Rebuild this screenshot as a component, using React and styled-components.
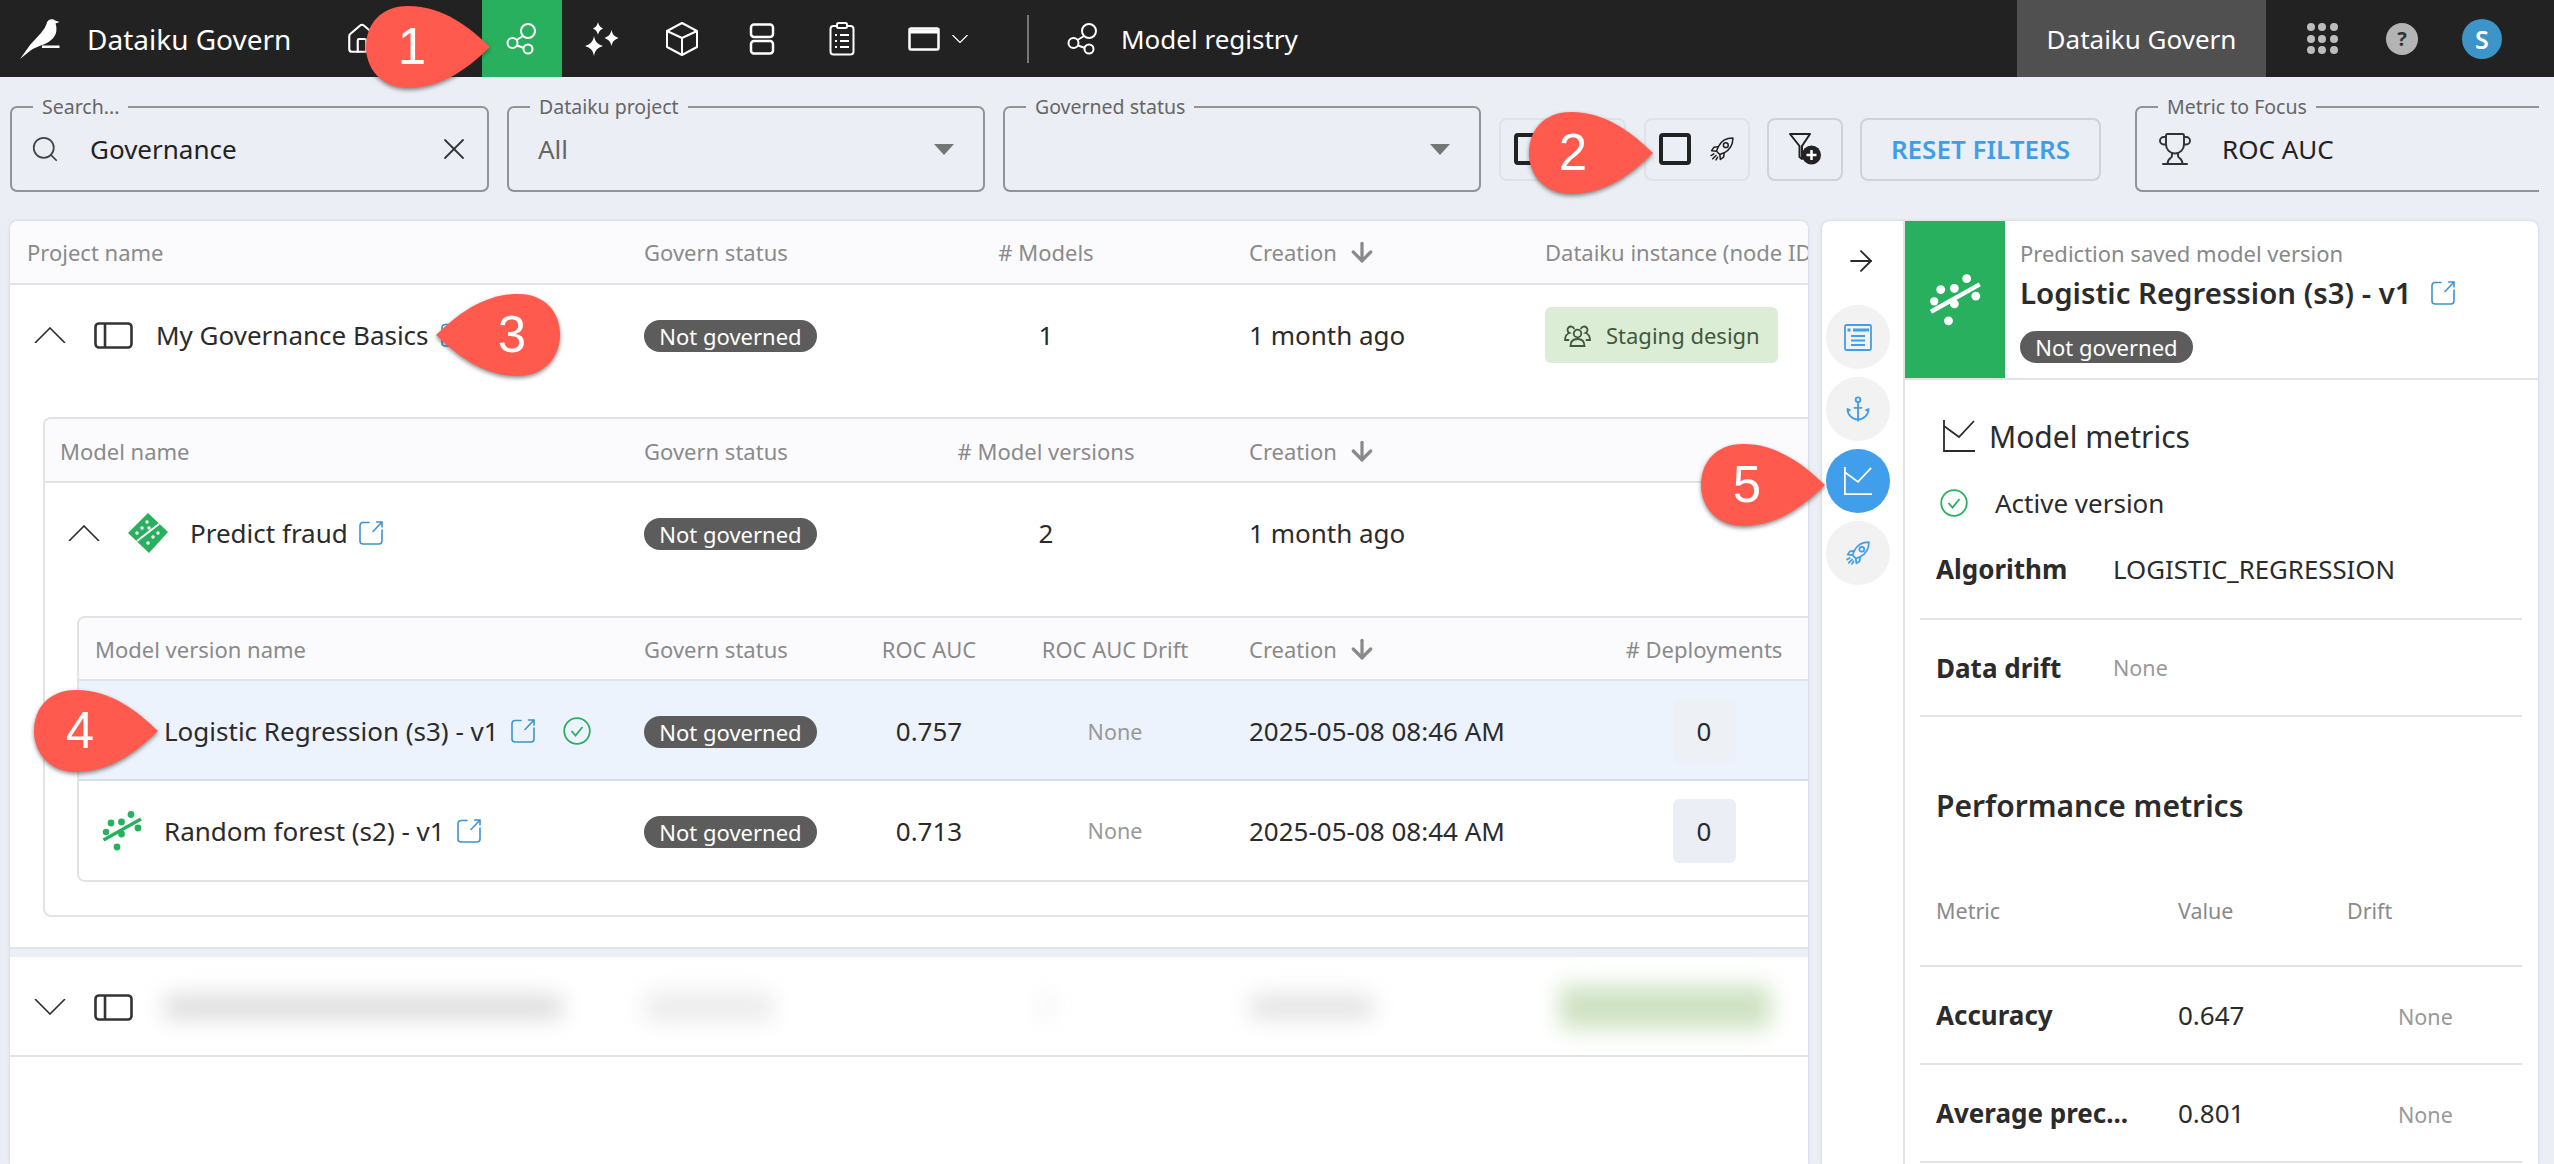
import React from "react";
import styled, { createGlobalStyle } from "styled-components";
import { House, Search, X, ArrowRight, ArrowDown, Anchor, Trophy } from "lucide-react";

const GlobalStyle = createGlobalStyle`
  html, body {
    margin: 0;
    padding: 0;
    background: #ebeef4;
    font-family: "Noto Sans", "Open Sans", sans-serif;
    color: #2b2b2b;
  }
  * { box-sizing: border-box; }
`;

const Frame = styled.div`
  position: relative;
  width: 2554px;
  height: 1164px;
  overflow: hidden;
  display: flex;
  flex-direction: column;
  background: #ebeef4;
`;

/* top bar */
const TopBar = styled.header`
  height: 77px;
  flex: none;
  display: flex;
  align-items: center;
  background: #222222;
  color: #fff;
`;

const Brand = styled.div`
  width: 322px;
  flex: none;
  display: flex;
  align-items: center;
  gap: 27px;
  padding-left: 20px;
  font-size: 28px;
`;

const NavItem = styled.div`
  width: 80px;
  height: 77px;
  flex: none;
  display: flex;
  align-items: center;
  justify-content: center;
  gap: 12px;
  background: ${(p) => (p.$active ? "#29b05f" : "transparent")};
`;

const WindowItem = styled(NavItem)`
  width: 110px;
  justify-content: flex-start;
  padding-left: 26px;
`;

const Divider = styled.div`
  width: 2px;
  height: 48px;
  margin-left: 35px;
  background: #777;
`;

const Crumb = styled.div`
  display: flex;
  align-items: center;
  gap: 22px;
  margin-left: 38px;
  font-size: 26px;
`;

const TopRight = styled.div`
  margin-left: auto;
  margin-right: 32px;
  display: flex;
  align-items: center;
  height: 77px;
`;

const InstanceTab = styled.div`
  width: 249px;
  height: 77px;
  margin-right: 16px;
  display: flex;
  align-items: center;
  justify-content: center;
  background: #505050;
  font-size: 26px;
`;

const Dots = styled.div`
  display: grid;
  grid-template-columns: repeat(3, 8px);
  gap: 3.5px;
  span {
    width: 8px;
    height: 8px;
    border-radius: 50%;
    background: #bdbdbd;
  }
`;

const HelpDot = styled.div`
  width: 32px;
  height: 32px;
  border-radius: 50%;
  display: flex;
  align-items: center;
  justify-content: center;
  background: #b4b4b4;
  color: #333;
  font-size: 20px;
  font-weight: 700;
`;

const Avatar = styled.div`
  width: 40px;
  height: 40px;
  border-radius: 50%;
  display: flex;
  align-items: center;
  justify-content: center;
  background: #3d94c8;
  color: #fff;
  font-size: 25px;
  font-weight: 600;
`;

/* filter bar */
const FilterBar = styled.div`
  height: 144px;
  flex: none;
  display: flex;
  align-items: center;
  padding: 0 0 0 10px;
  gap: 18px;
`;

const Field = styled.div`
  position: relative;
  width: ${(p) => p.$w}px;
  height: 86px;
  flex: none;
  display: flex;
  align-items: center;
  gap: ${(p) => p.$gap || 0}px;
  padding: 0 ${(p) => p.$right ?? 23}px 0 ${(p) => p.$left ?? 23}px;
  border: 2px solid #8f9595;
  border-right: ${(p) => (p.$open ? "none" : "2px solid #8f9595")};
  border-radius: ${(p) => (p.$open ? "7px 0 0 7px" : "7px")};
  font-size: 26px;
  margin-left: ${(p) => p.$ml || 0}px;
`;

const FieldLabel = styled.label`
  position: absolute;
  top: -15px;
  left: 21px;
  padding: 0 9px;
  background: #ebeef4;
  color: #666;
  font-size: 19.5px;
  line-height: 27px;
`;

const FieldValue = styled.span`
  flex: 1;
  color: ${(p) => (p.$muted ? "#666" : "#222")};
`;

const Caret = styled.div`
  width: 0;
  height: 0;
  border-left: 10px solid transparent;
  border-right: 10px solid transparent;
  border-top: 11px solid #757575;
`;

const ToolButton = styled.button`
  width: ${(p) => p.$w}px;
  height: 63px;
  flex: none;
  display: flex;
  align-items: center;
  justify-content: ${(p) => (p.$center ? "center" : "flex-start")};
  gap: 19px;
  padding: ${(p) => (p.$center ? "0" : "0 0 0 13px")};
  background: transparent;
  border: 2px solid ${(p) => (p.$strong ? "#d0d2d6" : "#e0e2e6")};
  border-radius: 8px;
  font-family: inherit;
  margin-left: ${(p) => p.$ml || 0}px;
`;

const ResetButton = styled(ToolButton)`
  color: #3f9eea;
  font-size: 26px;
  font-weight: 600;
`;

const SquareGlyph = styled.span`
  width: 32px;
  height: 32px;
  flex: none;
  border: 4px solid #222;
  border-radius: 4px;
`;

/* content */
const Content = styled.main`
  flex: 1;
  min-height: 0;
  display: flex;
  gap: 14px;
  padding-left: 10px;
`;

const TablePanel = styled.section`
  width: 1798px;
  flex: none;
  overflow: hidden;
  background: #fff;
  border-radius: 8px 8px 0 0;
  box-shadow: 0 0 3px rgba(120, 130, 150, 0.35);
`;

const HeadRow = styled.div`
  display: grid;
  grid-template-columns: ${(p) => p.$cols};
  align-items: center;
  height: ${(p) => p.$h}px;
  padding-top: ${(p) => p.$pt || 0}px;
  background: #fbfbfe;
  border-bottom: 2px solid #e1e3e5;
  color: #8a8a8a;
  font-size: 22px;
  white-space: nowrap;
`;

const BodyRow = styled.div`
  display: grid;
  grid-template-columns: ${(p) => p.$cols};
  align-items: center;
  height: ${(p) => p.$h || 100}px;
  padding-top: ${(p) => (p.$line ? 2 : 0)}px;
  background: ${(p) => (p.$selected ? "#ecf3fd" : "#fff")};
  border-bottom: ${(p) => (p.$line ? `2px solid ${p.$selected ? "#d5dde6" : "#e1e3e5"}` : "none")};
  font-size: 26px;
  white-space: nowrap;
`;

const HeadCell = styled.div`
  padding-left: ${(p) => p.$pad || 0}px;
  display: flex;
  align-items: center;
  gap: 10px;
  justify-content: ${(p) => (p.$center ? "center" : "flex-start")};
`;

const NameCell = styled.div`
  display: flex;
  align-items: center;
  padding-left: ${(p) => p.$pad}px;
`;

const Gap = styled.span`
  width: ${(p) => p.$w}px;
  flex: none;
`;

const CenterCell = styled.div`
  display: flex;
  justify-content: center;
`;

const Muted = styled.span`
  color: #999;
  font-size: 21.5px;
`;

const Badge = styled.span`
  display: inline-flex;
  align-items: center;
  justify-content: center;
  width: 173px;
  height: 32px;
  border-radius: 16px;
  background: #5c5c5c;
  color: #fff;
  font-size: 22px;
`;

const InstanceTag = styled.span`
  display: inline-flex;
  align-items: center;
  gap: 15px;
  width: 233px;
  height: 56px;
  padding-left: 19px;
  border-radius: 6px;
  background: #dcedd5;
  color: #41583d;
  font-size: 22px;
`;

const CountBox = styled.span`
  display: flex;
  align-items: center;
  justify-content: center;
  width: 63px;
  height: 64px;
  border-radius: 6px;
  background: ${(p) => (p.$selected ? "#edf0f4" : "#ebeef4")};
`;

const Nested = styled.div`
  width: ${(p) => p.$w}px;
  margin-left: ${(p) => p.$ml}px;
  margin-top: ${(p) => p.$mt || 0}px;
  padding-bottom: ${(p) => p.$pb || 0}px;
  border: 2px solid #e1e3e5;
  border-right: none;
  border-radius: 8px 0 0 8px;
  overflow: hidden;
`;

const ProjectBlock = styled.div`
  height: 728px;
  border-bottom: 2px solid #e1e3e5;
`;

const Spacer = styled.div`
  height: 8px;
  background: #ebeef4;
`;

const BlurBar = styled.div`
  width: ${(p) => p.$w}px;
  height: ${(p) => p.$h}px;
  margin-left: ${(p) => p.$ml || 0}px;
  background: ${(p) => p.$bg};
  border-radius: 8px;
  filter: blur(11px);
`;

/* side panel */
const SidePanel = styled.aside`
  width: 716px;
  flex: none;
  display: flex;
  background: #fff;
  border-radius: 8px 8px 0 0;
  box-shadow: 0 0 3px rgba(120, 130, 150, 0.35);
  overflow: hidden;
`;

const Rail = styled.nav`
  width: 83px;
  flex: none;
  display: flex;
  flex-direction: column;
  gap: 8px;
  padding: 23px 0 0 4px;
  border-right: 2px solid #e1e3e5;
`;

const RailArrow = styled.div`
  height: 53px;
  padding-left: 18px;
`;

const RailButton = styled.div`
  width: 64px;
  height: 64px;
  border-radius: 50%;
  display: flex;
  align-items: center;
  justify-content: center;
  background: ${(p) => (p.$active ? "#419eea" : "#f2f2f2")};
`;

const SideBody = styled.div`
  flex: 1;
  display: flex;
  flex-direction: column;
  min-width: 0;
`;

const SideHeader = styled.div`
  height: 159px;
  flex: none;
  display: flex;
  border-bottom: 2px solid #e1e3e5;
`;

const GreenTile = styled.div`
  width: 100px;
  display: flex;
  align-items: center;
  justify-content: center;
  background: #29b05f;
`;

const SideTitles = styled.div`
  padding: 18px 0 0 15px;
`;

const Kind = styled.div`
  color: #888;
  font-size: 22px;
  line-height: 28px;
`;

const SideName = styled.div`
  display: flex;
  align-items: center;
  gap: 19px;
  margin-top: 5px;
  height: 42px;
  font-size: 29.4px;
  font-weight: 600;
  white-space: nowrap;
`;

const SideBadgeWrap = styled.div`
  margin-top: 17px;
`;

const SideSection = styled.div`
  padding: 0 16px 0 15px;
`;

const MetricsTitle = styled.div`
  display: flex;
  align-items: center;
  gap: 14px;
  height: 32px;
  margin-top: 40px;
  padding-left: 23px;
  font-size: 30px;
`;

const ActiveRow = styled.div`
  display: flex;
  align-items: center;
  gap: 27px;
  height: 28px;
  margin-top: 37px;
  padding-left: 20px;
  font-size: 26px;
`;

const InfoRow = styled.div`
  display: grid;
  grid-template-columns: 177px 1fr;
  align-items: center;
  height: ${(p) => p.$h}px;
  margin-top: ${(p) => p.$mt || 0}px;
  padding-left: 16px;
  border-bottom: 2px solid #e1e3e5;
  font-size: 25.8px;
`;

const Key = styled.span`
  font-weight: 700;
  font-size: 26px;
  white-space: nowrap;
`;

const PerfTitle = styled.h2`
  margin: 69px 0 0;
  height: 40px;
  padding-left: 16px;
  font-size: 30px;
  line-height: 40px;
  font-weight: 600;
`;

const MetricHead = styled.div`
  display: grid;
  grid-template-columns: 242px 169px 1fr;
  align-items: center;
  height: 83px;
  margin-top: 58px;
  padding: 0 0 29px 16px;
  border-bottom: 2px solid #e1e3e5;
  color: #8a8a8a;
  font-size: 21.5px;
`;

const MetricRow = styled.div`
  display: grid;
  grid-template-columns: 242px 169px 1fr;
  align-items: center;
  height: 98px;
  padding-left: 16px;
  border-bottom: 2px solid #e1e3e5;
  font-size: 26px;
`;

const DriftNone = styled.div`
  padding-left: 51px;
`;

/* annotation markers over the screenshot */
const Marker = styled.div`
  position: absolute;
  left: ${(p) => p.$x}px;
  top: ${(p) => p.$y}px;
  width: 124px;
  height: 82px;
  filter: drop-shadow(0 2px 2px rgba(40, 40, 40, 0.55));
  svg {
    display: block;
    transform: ${(p) => (p.$flip ? "scaleX(-1)" : "none")};
  }
`;

const MarkerNumber = styled.span`
  position: absolute;
  top: 0;
  left: ${(p) => p.$nx}px;
  width: 40px;
  margin-left: -20px;
  text-align: center;
  color: #fff;
  font-family: "Liberation Sans", Arial, sans-serif;
  font-size: 51px;
  line-height: 82px;
`;

/* icons */
const Logo = () => (
  <svg width="40" height="40" viewBox="0 0 40 40" fill="#fff">
    <path d="M32 0.300C29 0.300 27 2 26.500 5C25.500 8 24 10 21 14L10 26L0 40L10.500 31.500C14 29 18 27.500 22 26C28 24 34 20 36 14C36.800 11 36.500 7 35.500 4.500L39.500 3L35 1.500C34 0.500 33 0.300 32 0.300Z" />
    <rect x="22" y="26.500" width="17.500" height="2.500" />
  </svg>
);

const RegistryIcon = ({ size = 32, color = "#fff" }) => (
  <svg width={size} height={size} viewBox="0 0 32 32" fill="none" stroke={color} strokeWidth="2">
    <circle cx="22" cy="8" r="7" />
    <circle cx="6.500" cy="20" r="5" />
    <circle cx="22" cy="26" r="4.500" />
    <path d="M17 13L10.500 17M11 22.500L18 25" />
  </svg>
);

const Sparkles = () => (
  <svg width="34" height="34" viewBox="0 0 34 34" fill="#fff">
    <path d="M13 0C14 3.500 14.500 4.500 18 6.500C14.500 8.500 14 9.500 13 13C12 9.500 11.500 8.500 8 6.500C11.500 4.500 12 3.500 13 0Z" />
    <path d="M26.500 8C27.500 12.500 29 14 33.500 16C29 18 27.500 19.500 26.500 24C25.500 19.500 24 18 19.500 16C24 14 25.500 12.500 26.500 8Z" />
    <path d="M9 14C10 20 12.500 22 18 24C12.500 26 10 28 9 34C8 28 5.500 26 0 24C5.500 22 8 20 9 14Z" />
  </svg>
);

const CubeIcon = () => (
  <svg width="32" height="34" viewBox="0 0 32 34" fill="none" stroke="#fff" strokeWidth="2" strokeLinejoin="round">
    <path d="M16 1L31 9V25L16 33L1 25V9Z" />
    <path d="M1 9L16 16L31 9M16 16V33" />
  </svg>
);

const StackIcon = () => (
  <svg width="26" height="32" viewBox="0 0 26 32" fill="none" stroke="#fff" strokeWidth="2.500">
    <rect x="2" y="1.500" width="22" height="12.500" rx="3" />
    <rect x="2" y="18" width="22" height="12.500" rx="3" />
  </svg>
);

const ClipboardIcon = () => (
  <svg width="26" height="34" viewBox="0 0 26 34" fill="none" stroke="#fff" strokeWidth="2">
    <rect x="1.500" y="4" width="23" height="28.500" rx="3" />
    <rect x="8" y="1" width="10" height="5" rx="1.500" fill="#222" />
    <path d="M6 13H8M11 13H20M6 19H8M11 19H20M6 25H8M11 25H20" />
  </svg>
);

const WindowIcon = () => (
  <svg width="32" height="24" viewBox="0 0 32 24" fill="none" stroke="#fff">
    <rect x="1.500" y="1.500" width="29" height="21" rx="1.500" strokeWidth="2.500" />
    <path d="M1.500 4.500H30.500" strokeWidth="4" />
  </svg>
);

const Chevron = ({ size = 32, up, color = "#2b2b2b", weight = 1.6 }) => (
  <svg width={size} height={size / 2} viewBox="0 0 32 16" fill="none" stroke={color} strokeWidth={weight}>
    <path d={up ? "M1 16L16 1L31 16" : "M1 0L16 15L31 0"} />
  </svg>
);

const PanelIcon = () => (
  <svg width="39" height="27" viewBox="0 0 39 27" fill="none" stroke="#333" strokeWidth="2.600">
    <rect x="1.500" y="1.500" width="36" height="24" rx="3.500" />
    <path d="M11 1.500V25.500" />
  </svg>
);

const LinkIcon = ({ size = 24 }) => (
  <svg width={size} height={size} viewBox="0 0 24 24" fill="none" stroke="#3d94c8" strokeWidth="1.600" strokeLinecap="round">
    <path d="M10 1.500H4A3 3 0 0 0 1 4.500V20A3 3 0 0 0 4 23H20A3 3 0 0 0 23 20V9" />
    <path d="M14 10.500L23 1M17.500 1H23V6" />
  </svg>
);

const CheckCircle = ({ size = 28 }) => (
  <svg width={size} height={size} viewBox="0 0 28 28" fill="none" stroke="#29b05f" strokeWidth="1.800">
    <circle cx="14" cy="14" r="12.800" />
    <path d="M8.500 14L12.500 18.500L19.500 10" />
  </svg>
);

const Scatter = ({ size = 40, color = "#29b05f" }) => (
  <svg width={size} height={size} viewBox="0 0 40 40" fill={color}>
    <circle cx="29" cy="3.500" r="3.400" />
    <circle cx="9" cy="12" r="3.400" />
    <circle cx="19.500" cy="11" r="3.400" />
    <circle cx="36" cy="17" r="3.400" />
    <circle cx="4" cy="21" r="3.200" />
    <circle cx="19.500" cy="23" r="3.400" />
    <circle cx="15" cy="36" r="3.400" />
    <path d="M1.500 29L39 8" stroke={color} strokeWidth="3.400" />
  </svg>
);

const Diamond = () => (
  <svg width="40" height="40" viewBox="0 0 40 40">
    <path d="M20 0L40 19L21 40L0 20Z" fill="#29b05f" />
    <path d="M9 28L31 11" stroke="#fff" strokeWidth="2" />
    <g fill="#fff">
      <circle cx="19" cy="9" r="1.700" />
      <circle cx="14" cy="15" r="1.700" />
      <circle cx="21" cy="15" r="1.700" />
      <circle cx="9" cy="20" r="1.700" />
      <circle cx="30" cy="20" r="1.700" />
      <circle cx="25" cy="24" r="1.700" />
      <circle cx="20" cy="30" r="1.700" />
    </g>
  </svg>
);

const ChartIcon = ({ size = 32, color = "#2b2b2b", weight = 1.800 }) => (
  <svg width={size} height={size} viewBox="0 0 32 32" fill="none" stroke={color} strokeWidth={weight}>
    <path d="M1 0V31H32" />
    <path d="M1 6L16 17L31 1" />
  </svg>
);

const FilterPlus = () => (
  <svg width="32" height="32" viewBox="0 0 32 32" fill="none">
    <path d="M1 1H21L13 13V26L10.500 24V13Z" stroke="#222" strokeWidth="2" strokeLinejoin="round" />
    <circle cx="22.500" cy="22" r="9.500" fill="#222" />
    <path d="M17.500 22H27.500M22.500 17V27" stroke="#fff" strokeWidth="2.500" />
  </svg>
);

const CardIcon = () => (
  <svg width="28" height="27" viewBox="0 0 28 27" fill="none" stroke="#419eea" strokeWidth="1.800">
    <rect x="1" y="1" width="26" height="25" rx="1.500" />
    <rect x="3.500" y="4.500" width="3" height="3" fill="#419eea" stroke="none" />
    <rect x="9" y="4.500" width="16" height="3" fill="#419eea" stroke="none" />
    <path d="M7 12H21M7 16.500H21M7 21H21" />
  </svg>
);

const RocketIcon = ({ size = 24, color = "#222", weight = 1.4 }) => (
  <svg width={size} height={size} viewBox="0 0 22 22" fill="none" stroke={color} strokeWidth={weight} strokeLinejoin="round" strokeLinecap="round">
    <path d="M21 1C15 1 10 4 7.500 9L6 13L9 16L13 14.500C18 12 21 7 21 1Z" />
    <circle cx="14.500" cy="7.500" r="2.200" />
    <path d="M7.500 9L3.500 9.500L1.500 12.500L6 13" />
    <path d="M13 14.500L12.500 18.500L9.500 20.500L9 16" />
    <path d="M3.500 15.500L1 17M5.500 17L2.500 20M7 18.500L5.500 21" />
  </svg>
);

const TeamIcon = () => (
  <svg width="27" height="23" viewBox="0 0 27 23" fill="none" stroke="#41583d" strokeWidth="1.800" strokeLinecap="round">
    <circle cx="13.500" cy="9.500" r="3.800" />
    <path d="M6.500 22C6.500 17 9.500 15 13.500 15C17.500 15 20.500 17 20.500 22Z" />
    <path d="M10 4.500A3.400 3.400 0 1 0 5.500 9C2.500 10 1 12.500 1 16H4.500" />
    <path d="M17 4.500A3.400 3.400 0 1 1 21.500 9C24.500 10 26 12.500 26 16H22.500" />
  </svg>
);

const MarkerShape = () => (
  <svg width="124" height="82" viewBox="0 0 124 82">
    <path d="M124 41C104 60 78 82 42 82C15 82 0 62 0 41C0 18 15 0 42 0C78 0 104 22 124 41Z" fill="#ff5a4d" />
  </svg>
);

const Callout = ({ n, x, y, nx, flip }) => (
  <Marker $x={x} $y={y} $flip={flip}>
    <MarkerShape />
    <MarkerNumber $nx={nx}>{n}</MarkerNumber>
  </Marker>
);

const L0 = "634px 199px 406px 296px 1fr";
const L1 = "599px 199px 406px 296px 1fr";
const L2 = "565px 233px 104px 268px 377px 156px 1fr";

const Creation = () => (
  <HeadCell>
    Creation <ArrowDown size={30} color="#8a8a8a" strokeWidth={2.6} />
  </HeadCell>
);

const versions = [
  { name: "Logistic Regression (s3) - v1", roc: "0.757", date: "2025-05-08 08:46 AM", active: true },
  { name: "Random forest (s2) - v1", roc: "0.713", date: "2025-05-08 08:44 AM" },
];

const App = () => (
  <Frame>
    <GlobalStyle />
    <TopBar>
      <Brand>
        <Logo />
        Dataiku Govern
      </Brand>
      <NavItem>
        <House size={34} color="#fff" strokeWidth={1.5} />
      </NavItem>
      <NavItem>
        <StackIcon />
      </NavItem>
      <NavItem $active>
        <RegistryIcon />
      </NavItem>
      <NavItem>
        <Sparkles />
      </NavItem>
      <NavItem>
        <CubeIcon />
      </NavItem>
      <NavItem>
        <StackIcon />
      </NavItem>
      <NavItem>
        <ClipboardIcon />
      </NavItem>
      <WindowItem>
        <WindowIcon />
        <Chevron size={16} color="#fff" weight={2.4} />
      </WindowItem>
      <Divider />
      <Crumb>
        <RegistryIcon />
        Model registry
      </Crumb>
      <TopRight>
        <InstanceTab>Dataiku Govern</InstanceTab>
        <NavItem>
          <Dots>
            {Array.from({ length: 9 }, (_, i) => (
              <span key={i} />
            ))}
          </Dots>
        </NavItem>
        <NavItem>
          <HelpDot>?</HelpDot>
        </NavItem>
        <NavItem>
          <Avatar>S</Avatar>
        </NavItem>
      </TopRight>
    </TopBar>

    <FilterBar>
      <Field $w={479} $gap={30} $left={18} $right={15}>
        <FieldLabel>Search...</FieldLabel>
        <Search size={30} color="#444" strokeWidth={1.4} />
        <FieldValue>Governance</FieldValue>
        <X size={36} color="#333" strokeWidth={1.2} />
      </Field>
      <Field $w={478} $left={29} $right={29}>
        <FieldLabel>Dataiku project</FieldLabel>
        <FieldValue $muted>All</FieldValue>
        <Caret />
      </Field>
      <Field $w={478} $left={29} $right={29}>
        <FieldLabel>Governed status</FieldLabel>
        <FieldValue />
        <Caret />
      </Field>
      <ToolButton $w={127}>
        <SquareGlyph />
        <RocketIcon />
      </ToolButton>
      <ToolButton $w={106}>
        <SquareGlyph />
        <RocketIcon />
      </ToolButton>
      <ToolButton $w={76} $center $strong $ml={-1}>
        <FilterPlus />
      </ToolButton>
      <ResetButton as="div" $w={241} $center $strong $ml={-1}>
        RESET FILTERS
      </ResetButton>
      <Field $w={404} $open $gap={29} $left={20} $ml={16}>
        <FieldLabel>Metric to Focus</FieldLabel>
        <Trophy size={36} color="#333" strokeWidth={1.3} />
        <FieldValue>ROC AUC</FieldValue>
      </Field>
    </FilterBar>

    <Content>
      <TablePanel>
        <ProjectBlock>
          <HeadRow $cols={L0} $h={64}>
            <HeadCell $pad={17}>Project name</HeadCell>
            <HeadCell>Govern status</HeadCell>
            <HeadCell $center># Models</HeadCell>
            <Creation />
            <HeadCell>Dataiku instance (node ID)</HeadCell>
          </HeadRow>
          <BodyRow $cols={L0}>
            <NameCell $pad={24}>
              <Chevron up />
              <Gap $w={28} />
              <PanelIcon />
              <Gap $w={23} />
              My Governance Basics
              <Gap $w={12} />
              <LinkIcon />
            </NameCell>
            <div>
              <Badge>Not governed</Badge>
            </div>
            <CenterCell>1</CenterCell>
            <div>1 month ago</div>
            <div>
              <InstanceTag>
                <TeamIcon />
                Staging design
              </InstanceTag>
            </div>
          </BodyRow>

          <Nested $w={1900} $ml={33} $mt={32} $pb={33}>
            <HeadRow $cols={L1} $h={64} $pt={2}>
              <HeadCell $pad={15}>Model name</HeadCell>
              <HeadCell>Govern status</HeadCell>
              <HeadCell $center># Model versions</HeadCell>
              <Creation />
            </HeadRow>
            <BodyRow $cols={L1}>
              <NameCell $pad={23}>
                <Chevron up />
                <Gap $w={28} />
                <Diamond />
                <Gap $w={22} />
                Predict fraud
                <Gap $w={11} />
                <LinkIcon />
              </NameCell>
              <div>
                <Badge>Not governed</Badge>
              </div>
              <CenterCell>2</CenterCell>
              <div>1 month ago</div>
            </BodyRow>

            <Nested $w={1900} $ml={32} $mt={33}>
              <HeadRow $cols={L2} $h={63}>
                <HeadCell $pad={16}>Model version name</HeadCell>
                <HeadCell>Govern status</HeadCell>
                <HeadCell $center>ROC AUC</HeadCell>
                <HeadCell $center>ROC AUC Drift</HeadCell>
                <Creation />
                <HeadCell $center># Deployments</HeadCell>
              </HeadRow>
              {versions.map((v, i) => (
                <BodyRow key={v.name} $cols={L2} $selected={v.active} $line={i === 0} $h={i === 0 ? 100 : 99}>
                  <NameCell $pad={23}>
                    <Scatter />
                    <Gap $w={22} />
                    {v.name}
                    <Gap $w={12} />
                    <LinkIcon />
                    {v.active && (
                      <>
                        <Gap $w={28} />
                        <CheckCircle />
                      </>
                    )}
                  </NameCell>
                  <div>
                    <Badge>Not governed</Badge>
                  </div>
                  <CenterCell>{v.roc}</CenterCell>
                  <CenterCell>
                    <Muted>None</Muted>
                  </CenterCell>
                  <div>{v.date}</div>
                  <CenterCell>
                    <CountBox $selected={v.active}>0</CountBox>
                  </CenterCell>
                </BodyRow>
              ))}
            </Nested>
          </Nested>
        </ProjectBlock>
        <Spacer />
        <BodyRow $cols={L0} $h={100} $line>
          <NameCell $pad={24}>
            <Chevron />
            <Gap $w={28} />
            <PanelIcon />
            <BlurBar $w={400} $h={24} $ml={30} $bg="#dcdcdc" />
          </NameCell>
          <BlurBar $w={130} $h={30} $bg="#ececec" />
          <CenterCell>
            <BlurBar $w={12} $h={30} $bg="#f2f2f2" />
          </CenterCell>
          <BlurBar $w={125} $h={24} $bg="#e2e2e2" />
          <BlurBar $w={212} $h={44} $ml={14} $bg="#cfe2c3" />
        </BodyRow>
      </TablePanel>

      <SidePanel>
        <Rail>
          <RailArrow>
            <ArrowRight size={34} color="#2b2b2b" strokeWidth={1.3} />
          </RailArrow>
          <RailButton>
            <CardIcon />
          </RailButton>
          <RailButton>
            <Anchor size={28} color="#419eea" strokeWidth={1.6} />
          </RailButton>
          <RailButton $active>
            <ChartIcon size={28} color="#fff" weight={2} />
          </RailButton>
          <RailButton>
            <RocketIcon color="#419eea" weight={1.6} />
          </RailButton>
        </Rail>
        <SideBody>
          <SideHeader>
            <GreenTile>
              <Scatter size={52} color="#fff" />
            </GreenTile>
            <SideTitles>
              <Kind>Prediction saved model version</Kind>
              <SideName>
                Logistic Regression (s3) - v1
                <LinkIcon />
              </SideName>
              <SideBadgeWrap>
                <Badge>Not governed</Badge>
              </SideBadgeWrap>
            </SideTitles>
          </SideHeader>
          <SideSection>
            <MetricsTitle>
              <ChartIcon />
              Model metrics
            </MetricsTitle>
            <ActiveRow>
              <CheckCircle />
              Active version
            </ActiveRow>
            <InfoRow $h={100} $mt={3}>
              <Key>Algorithm</Key>
              <span>LOGISTIC_REGRESSION</span>
            </InfoRow>
            <InfoRow $h={97}>
              <Key>Data drift</Key>
              <Muted>None</Muted>
            </InfoRow>
            <PerfTitle>Performance metrics</PerfTitle>
            <MetricHead>
              <span>Metric</span>
              <span>Value</span>
              <span>Drift</span>
            </MetricHead>
            <MetricRow>
              <Key>Accuracy</Key>
              <span>0.647</span>
              <DriftNone>
                <Muted>None</Muted>
              </DriftNone>
            </MetricRow>
            <MetricRow>
              <Key>Average prec...</Key>
              <span>0.801</span>
              <DriftNone>
                <Muted>None</Muted>
              </DriftNone>
            </MetricRow>
          </SideSection>
        </SideBody>
      </SidePanel>
    </Content>

    <Callout n="1" x={366} y={6} nx={46} />
    <Callout n="2" x={1529} y={112} nx={44} />
    <Callout n="3" x={436} y={294} nx={76} flip />
    <Callout n="4" x={34} y={690} nx={46} />
    <Callout n="5" x={1701} y={444} nx={46} />
  </Frame>
);

export default App;
